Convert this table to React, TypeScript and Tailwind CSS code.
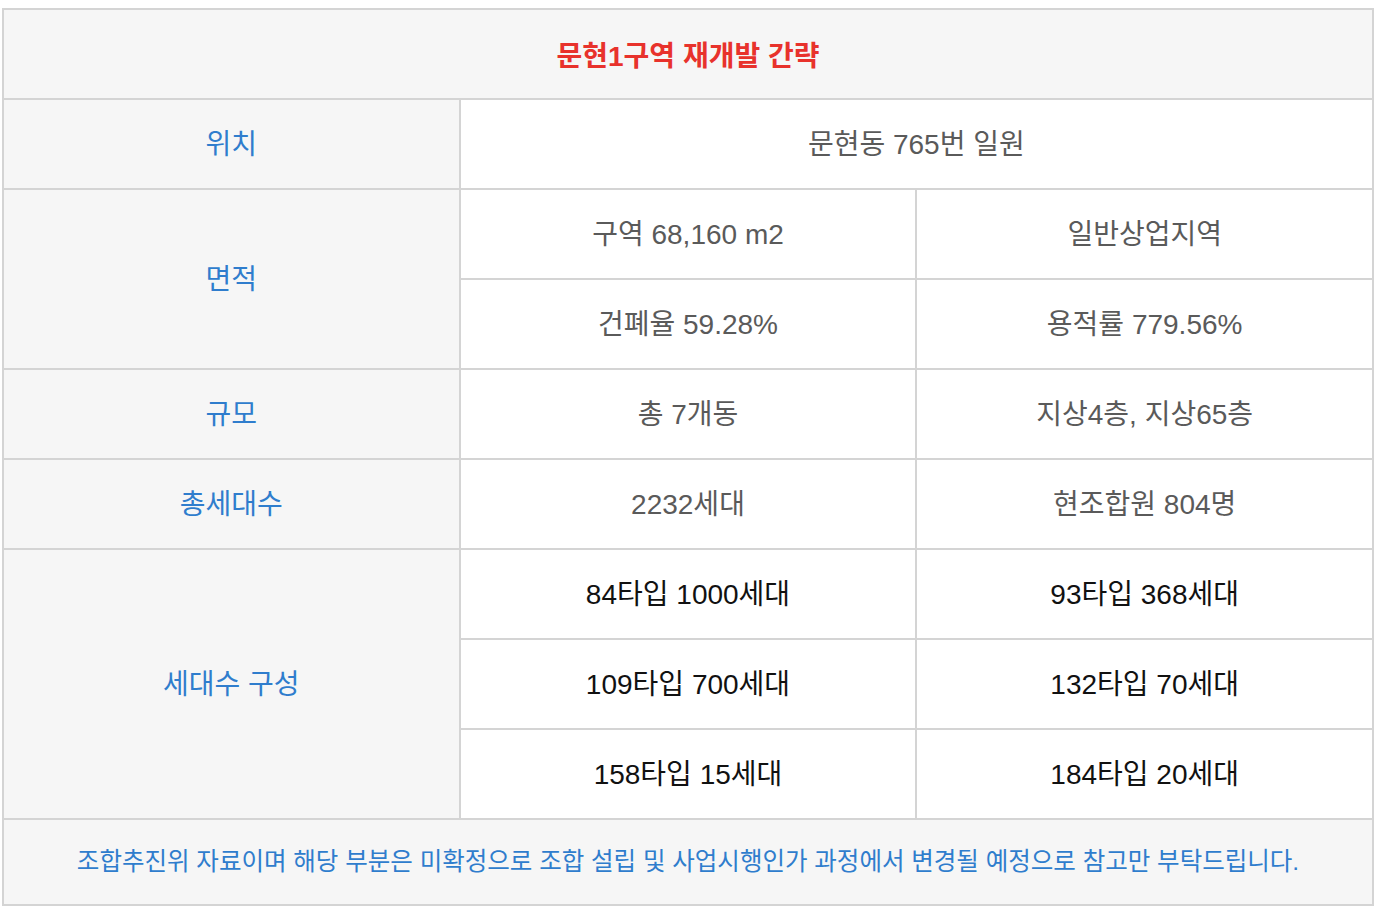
const font = "font-['Liberation_Sans','Noto_Sans_CJK_KR',sans-serif]";

function Label({ text, span = "" }: { text: string; span?: string }) {
  return (
    <div className={`flex items-center justify-center bg-[#f6f6f6] pt-[2px] text-[28px] text-[#2f7dcd] ${span}`}>
      {text}
    </div>
  );
}

function Cell({ text, dark = false, span = "" }: { text: string; dark?: boolean; span?: string }) {
  return (
    <div
      className={`flex items-center justify-center bg-white pt-[2px] text-[28px] ${
        dark ? "text-[#111111]" : "text-[#5a5a5a]"
      } ${span}`}
    >
      {text}
    </div>
  );
}

export default function App() {
  return (
    <div className={`min-h-screen bg-white px-[2px] pt-[8px] ${font}`}>
      <div className="grid w-[1372px] grid-cols-3 grid-rows-[88px_repeat(8,88px)_84px] gap-[2px] border-2 border-[#d4d4d4] bg-[#d4d4d4]">
        <div className="col-span-3 flex items-center justify-center bg-[#f6f6f6] pt-[5px] text-[28px] font-bold text-[#e8322c]">
          문현1구역 재개발 간략
        </div>

        <Label text="위치" />
        <Cell text="문현동 765번 일원" span="col-span-2" />

        <Label text="면적" span="row-span-2" />
        <Cell text="구역 68,160 m2" />
        <Cell text="일반상업지역" />
        <Cell text="건폐율 59.28%" />
        <Cell text="용적률 779.56%" />

        <Label text="규모" />
        <Cell text="총 7개동" />
        <Cell text="지상4층, 지상65층" />

        <Label text="총세대수" />
        <Cell text="2232세대" />
        <Cell text="현조합원 804명" />

        <Label text="세대수 구성" span="row-span-3" />
        <Cell text="84타입 1000세대" dark />
        <Cell text="93타입 368세대" dark />
        <Cell text="109타입 700세대" dark />
        <Cell text="132타입 70세대" dark />
        <Cell text="158타입 15세대" dark />
        <Cell text="184타입 20세대" dark />

        <div className="col-span-3 flex items-center justify-center bg-[#f6f6f6] text-[24.5px] text-[#2f7dcd]">
          조합추진위 자료이며 해당 부분은 미확정으로 조합 설립 및 사업시행인가 과정에서 변경될 예정으로 참고만 부탁드립니다.
        </div>
      </div>
    </div>
  );
}
